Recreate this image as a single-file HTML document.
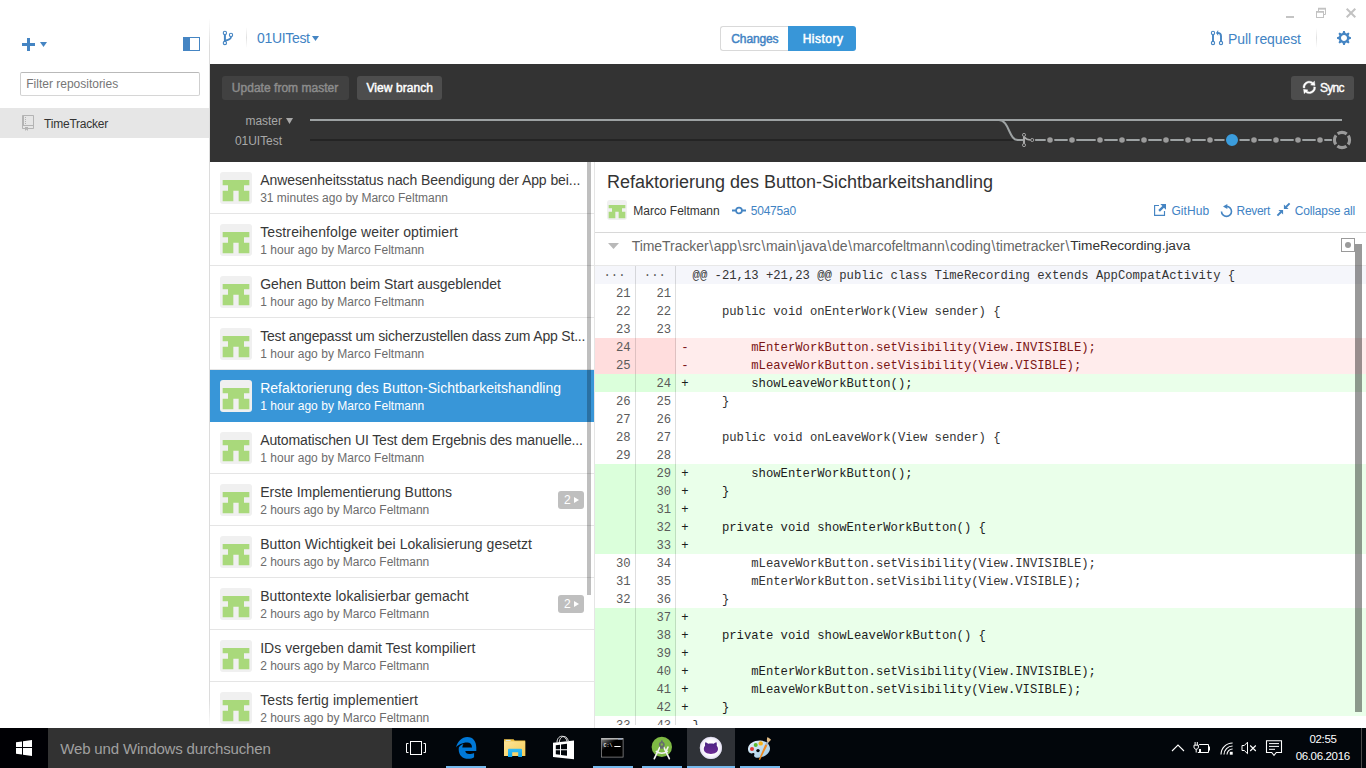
<!DOCTYPE html>
<html lang="de"><head><meta charset="utf-8"><title>GitHub</title>
<style>
html,body{margin:0;padding:0}
body{width:1366px;height:768px;overflow:hidden;background:#fff;position:relative;font-family:"Liberation Sans",sans-serif}
.t{position:absolute;white-space:pre;line-height:20px;height:20px}
.a{position:absolute}
.m{position:absolute;white-space:pre;font-family:"Liberation Mono",monospace;font-size:12.22px;line-height:18px;height:18px;color:#333;margin-top:1px}
svg{position:absolute;overflow:visible}
.row{position:absolute;left:210px;width:384px;height:51px;border-bottom:1px solid #e5e5e5}
.av{position:absolute;background:#f0f0f0;border-radius:3px}
</style></head><body>

<div class="a" style="left:209px;top:0;width:1px;height:728px;background:linear-gradient(180deg,rgba(220,220,220,0) 18px,#dcdcdc 46px,#dcdcdc 700px,rgba(220,220,220,0) 728px)"></div>
<div class="a" style="left:22px;top:43px;width:13px;height:3px;background:#4585c3"></div>
<div class="a" style="left:27px;top:38px;width:3px;height:13px;background:#4585c3"></div>
<svg style="left:40px;top:42px" width="7" height="5"><path d="M0 0H7L3.5 5Z" fill="#4585c3"/></svg>
<div class="a" style="left:183px;top:37px;width:15px;height:12px;border:1px solid #4585c3;background:linear-gradient(90deg,#4585c3 6px,#fff 6px)"></div>
<div class="a" style="left:20px;top:72px;width:178px;height:22px;border:1px solid #cfcfcf;border-top-color:#b9b9b9;border-bottom-color:#d6d6d6;border-radius:2px;background:#fff"></div>
<span id="filt" class="t" style="left:26.30px;top:73.94px;font-size:12.00px;color:#767676;font-weight:400;letter-spacing:-0.007px;">Filter repositories</span>
<div class="a" style="left:0;top:108px;width:209px;height:30px;background:#e6e6e6"></div>
<svg style="left:22px;top:115px" width="12" height="16" viewBox="0 0 12 16"><path fill="#b4b4b4" fill-rule="evenodd" d="M4 9H3V8h1v1zm0-3H3v1h1V6zm0-2H3v1h1V4zm0-2H3v1h1V2zm8-1v12c0 .55-.45 1-1 1H6v2l-1.500-1.500L3 16v-2H1c-.55 0-1-.45-1-1V1c0-.55.45-1 1-1h10c.55 0 1 .45 1 1zm-1 10H1v2h2v-1h3v1h5v-2zm0-10H2v9h9V1z"/></svg>
<span id="repo" class="t" style="left:44.10px;top:113.74px;font-size:12.00px;color:#333;font-weight:400;letter-spacing:-0.225px;">TimeTracker</span>
<svg style="left:220px;top:29px" width="14" height="18" viewBox="220 29 14 18"><g stroke="#4585c3" fill="none"><path d="M224.900 34.300V41.600" stroke-width="2"/><path d="M231 36.400V37.300C231 39.500 228 39.700 225.400 40.700" stroke-width="1.700"/><g fill="#fff" stroke-width="1.100"><circle cx="224.900" cy="32.900" r="1.650"/><circle cx="224.900" cy="43" r="1.650"/><circle cx="231" cy="34.900" r="1.650"/></g></g></svg>
<div class="a" style="left:246px;top:27px;width:1px;height:21px;background:linear-gradient(180deg,rgba(225,225,225,0),#e1e1e1 50%,rgba(225,225,225,0))"></div>
<span id="br" class="t" style="left:257.00px;top:28.15px;font-size:14.00px;color:#4183c4;font-weight:400;letter-spacing:-0.321px;">01UITest</span>
<svg style="left:312px;top:35.5px" width="7" height="5"><path d="M0 0H7L3.5 5Z" fill="#4585c3"/></svg>
<div class="a" style="left:720px;top:26px;width:68px;height:23px;border:1px solid #d9d9d9;border-right:0;border-radius:3px 0 0 3px;background:#fff"></div>
<div class="a" style="left:788px;top:26px;width:68px;height:25px;border-radius:0 3px 3px 0;background:#3896d8"></div>
<span id="chg" class="t" style="left:731.30px;top:28.84px;font-size:12.00px;color:#4183c4;font-weight:400;letter-spacing:-0.124px;-webkit-text-stroke:.45px #4183c4;">Changes</span>
<span id="his" class="t" style="left:802.70px;top:28.84px;font-size:12.00px;color:#fff;font-weight:400;letter-spacing:0.493px;-webkit-text-stroke:.5px #fff;">History</span>
<svg style="left:1209px;top:28px" width="16" height="19" viewBox="1209 28 16 19"><g stroke="#4585c3" fill="none"><path d="M1213 34.300V41.600" stroke-width="1.900"/><path d="M1221 41.600V36C1221 34 1220 32.900 1217.500 32.900" stroke-width="1.900"/><path d="M1216 32.900L1218.200 30V35.800Z" fill="#4585c3" stroke="none"/><g fill="#fff" stroke-width="1.100"><circle cx="1213" cy="32.900" r="1.650"/><circle cx="1213" cy="43" r="1.650"/><circle cx="1221" cy="43" r="1.650"/></g></g></svg>
<span id="pr" class="t" style="left:1228.00px;top:28.65px;font-size:14.00px;color:#4183c4;font-weight:400;letter-spacing:-0.085px;">Pull request</span>
<div class="a" style="left:1316px;top:28px;width:1px;height:20px;background:linear-gradient(180deg,rgba(225,225,225,0),#e1e1e1 50%,rgba(225,225,225,0))"></div>
<svg style="left:1337px;top:31px" width="14" height="14" viewBox="0 0 14 14"><path fill="#4585c3" fill-rule="evenodd" d="M14 8.770v-1.600l-1.940-.640-.450-1.090.880-1.840-1.130-1.130-1.810.910-1.090-.450-.690-1.920h-1.600l-.630 1.940-1.110.450-1.840-.880-1.130 1.130.910 1.810-.450 1.090L0 7.230v1.590l1.940.640.450 1.090-.880 1.840 1.130 1.130 1.810-.910 1.090.450.690 1.920h1.590l.630-1.940 1.110-.450 1.840.880 1.130-1.130-.920-1.810.470-1.090L14 8.750v.020zM7 11c-1.660 0-3-1.340-3-3s1.340-3 3-3 3 1.340 3 3-1.340 3-3 3z" transform="translate(0,-1)"/></svg>
<div class="a" style="left:1286px;top:16px;width:8px;height:2px;background:#c4c4c4"></div>
<svg style="left:1316px;top:8px" width="10" height="10"><g fill="none" stroke="#c2c2c2"><path d="M2.500 3V1H9.500V6.500H8"/><path d="M2 0.500H10" stroke-width="1.500"/><rect x="0.500" y="4" width="7" height="5.500" fill="#fff"/><path d="M0 3.750H8" stroke-width="1.500"/></g></svg>
<svg style="left:1346px;top:8px" width="10" height="10"><path d="M0.700 0.700L9.300 9.300M9.300 0.700L0.700 9.300" stroke="#c2c2c2" stroke-width="2"/></svg>
<div class="a" style="left:210px;top:64px;width:1156px;height:98px;background:#333"></div>
<div class="a" style="left:222px;top:76px;width:127px;height:24px;border-radius:3px;background:#414141"></div>
<div class="a" style="left:357px;top:76px;width:85px;height:24px;border-radius:3px;background:#4d4d4d"></div>
<div class="a" style="left:1291px;top:76px;width:63px;height:24px;border-radius:3px;background:#4d4d4d"></div>
<span id="upd" class="t" style="left:231.80px;top:77.84px;font-size:12.00px;color:#8c8c8c;font-weight:400;letter-spacing:0.027px;-webkit-text-stroke:.45px #8c8c8c;">Update from master</span>
<span id="vb" class="t" style="left:366.50px;top:77.84px;font-size:12.00px;color:#fff;font-weight:400;letter-spacing:0.067px;-webkit-text-stroke:.45px #fff;">View branch</span>
<span id="sync" class="t" style="left:1319.90px;top:77.84px;font-size:12.00px;color:#fff;font-weight:400;letter-spacing:-0.700px;-webkit-text-stroke:.4px #fff;">Sync</span>
<svg style="left:1303.300px;top:78.500px" width="12.600" height="16.800" viewBox="0 0 12 16"><path fill="#fff" stroke="#fff" stroke-width="0.350" fill-rule="evenodd" d="M10.240 7.400a4.150 4.150 0 0 1-1.200 3.600 4.346 4.346 0 0 1-5.410.54L4.800 10.400.5 9.800l.6 4.200 1.310-1.260c2.360 1.740 5.700 1.570 7.840-.540a5.876 5.876 0 0 0 1.740-4.460l-1.750-.340zM2.960 5a4.346 4.346 0 0 1 5.410-.540L7.200 5.600l4.300.6-.6-4.200-1.310 1.260c-2.360-1.740-5.700-1.570-7.850.540C.5 5.030-.06 6.650.01 8.260l1.750.35A4.170 4.170 0 0 1 2.960 5z"/></svg>
<span id="mas" class="t" style="left:245.50px;top:110.84px;font-size:12.00px;color:#a8a8a8;font-weight:400;letter-spacing:-0.037px;">master</span>
<svg style="left:286px;top:117.500px" width="7" height="6"><path d="M0 0H7L3.5 6Z" fill="#a8a8a8"/></svg>
<span id="uit" class="t" style="left:235.00px;top:130.54px;font-size:12.00px;color:#a8a8a8;font-weight:400;letter-spacing:-0.051px;">01UITest</span>
<svg style="left:0;top:0" width="1366" height="170"><path d="M310 140H1014" stroke="#242424" stroke-width="2" fill="none"/><path d="M310 120H1342" stroke="#9da2a3" stroke-width="2" fill="none"/><path d="M999 120C1009.500 120.500 1008.500 140 1018 140H1023M1034.800 140H1332" stroke="#9da2a3" stroke-width="2" fill="none"/><circle cx="1032.200" cy="140" r="3" fill="#333"/><g stroke="#a9a9a9" fill="#333"><path d="M1024 135.500V144.500" stroke-width="2.100" fill="none"/><path d="M1024.500 137.300C1026.500 140 1028 140 1030.700 140" stroke-width="1.600" fill="none"/><circle cx="1024" cy="134.900" r="1.550" stroke-width="0.900"/><circle cx="1024" cy="145.100" r="1.550" stroke-width="0.900"/><circle cx="1032.200" cy="140" r="1.550" stroke-width="0.900"/></g><circle cx="1050" cy="140" r="3.600" fill="#9b9b9b" stroke="#333" stroke-width="1.600"/><circle cx="1072" cy="140" r="3.600" fill="#9b9b9b" stroke="#333" stroke-width="1.600"/><circle cx="1100" cy="140" r="3.600" fill="#9b9b9b" stroke="#333" stroke-width="1.600"/><circle cx="1122" cy="140" r="3.600" fill="#9b9b9b" stroke="#333" stroke-width="1.600"/><circle cx="1144" cy="140" r="3.600" fill="#9b9b9b" stroke="#333" stroke-width="1.600"/><circle cx="1166" cy="140" r="3.600" fill="#9b9b9b" stroke="#333" stroke-width="1.600"/><circle cx="1188" cy="140" r="3.600" fill="#9b9b9b" stroke="#333" stroke-width="1.600"/><circle cx="1210" cy="140" r="3.600" fill="#9b9b9b" stroke="#333" stroke-width="1.600"/><circle cx="1254" cy="140" r="3.600" fill="#9b9b9b" stroke="#333" stroke-width="1.600"/><circle cx="1276" cy="140" r="3.600" fill="#9b9b9b" stroke="#333" stroke-width="1.600"/><circle cx="1298" cy="140" r="3.600" fill="#9b9b9b" stroke="#333" stroke-width="1.600"/><circle cx="1320" cy="140" r="3.600" fill="#9b9b9b" stroke="#333" stroke-width="1.600"/><circle cx="1232" cy="140" r="6.800" fill="#3b9ddd" stroke="#333" stroke-width="1.600"/><circle cx="1342" cy="140" r="10.200" fill="#333"/><circle cx="1342" cy="140" r="7.600" fill="none" stroke="#9b9b9b" stroke-width="3.100" stroke-dasharray="9.700 2.238" stroke-dashoffset="4.850"/></svg>
<div class="a" style="left:210px;top:162px;width:385px;height:566px;overflow:hidden;background:#fff">
</div>
<div class="row" style="top:162px;"></div>
<div class="av" style="left:220px;top:172px;width:32px;height:32px"></div><svg style="left:220px;top:172px" width="32" height="32" viewBox="0 0 6 6" shape-rendering="auto"><path fill="#a9d97b" d="M.5 1.500h5v1h-1v1h1v2h-2v-2h-1v2h-2v-2h1v-1h-1z"/></svg>
<span id="ct0" class="t" style="left:260.20px;top:170.15px;font-size:14.00px;color:#383838;font-weight:400;letter-spacing:-0.075px;">Anwesenheitsstatus nach Beendigung der App bei...</span>
<span id="cm0" class="t" style="left:260.20px;top:188.44px;font-size:12.00px;color:#6c6c6c;font-weight:400;letter-spacing:-0.009px;">31 minutes ago by Marco Feltmann</span>
<div class="row" style="top:214px;"></div>
<div class="av" style="left:220px;top:224px;width:32px;height:32px"></div><svg style="left:220px;top:224px" width="32" height="32" viewBox="0 0 6 6" shape-rendering="auto"><path fill="#a9d97b" d="M.5 1.500h5v1h-1v1h1v2h-2v-2h-1v2h-2v-2h1v-1h-1z"/></svg>
<span id="ct1" class="t" style="left:260.20px;top:222.15px;font-size:14.00px;color:#383838;font-weight:400;letter-spacing:0.127px;">Testreihenfolge weiter optimiert</span>
<span id="cm1" class="t" style="left:260.20px;top:240.44px;font-size:12.00px;color:#6c6c6c;font-weight:400;letter-spacing:0.025px;">1 hour ago by Marco Feltmann</span>
<div class="row" style="top:266px;"></div>
<div class="av" style="left:220px;top:276px;width:32px;height:32px"></div><svg style="left:220px;top:276px" width="32" height="32" viewBox="0 0 6 6" shape-rendering="auto"><path fill="#a9d97b" d="M.5 1.500h5v1h-1v1h1v2h-2v-2h-1v2h-2v-2h1v-1h-1z"/></svg>
<span id="ct2" class="t" style="left:260.20px;top:274.15px;font-size:14.00px;color:#383838;font-weight:400;letter-spacing:-0.039px;">Gehen Button beim Start ausgeblendet</span>
<span id="cm2" class="t" style="left:260.20px;top:292.44px;font-size:12.00px;color:#6c6c6c;font-weight:400;letter-spacing:0.025px;">1 hour ago by Marco Feltmann</span>
<div class="row" style="top:318px;"></div>
<div class="av" style="left:220px;top:328px;width:32px;height:32px"></div><svg style="left:220px;top:328px" width="32" height="32" viewBox="0 0 6 6" shape-rendering="auto"><path fill="#a9d97b" d="M.5 1.500h5v1h-1v1h1v2h-2v-2h-1v2h-2v-2h1v-1h-1z"/></svg>
<span id="ct3" class="t" style="left:260.20px;top:326.15px;font-size:14.00px;color:#383838;font-weight:400;letter-spacing:-0.183px;">Test angepasst um sicherzustellen dass zum App St...</span>
<span id="cm3" class="t" style="left:260.20px;top:344.44px;font-size:12.00px;color:#6c6c6c;font-weight:400;letter-spacing:0.025px;">1 hour ago by Marco Feltmann</span>
<div class="row" style="top:370px;background:#3896d8;border-bottom-color:#3896d8;"></div>
<div class="av" style="left:220px;top:380px;width:32px;height:32px"></div><svg style="left:220px;top:380px" width="32" height="32" viewBox="0 0 6 6" shape-rendering="auto"><path fill="#a9d97b" d="M.5 1.500h5v1h-1v1h1v2h-2v-2h-1v2h-2v-2h1v-1h-1z"/></svg>
<span id="ct4" class="t" style="left:260.20px;top:378.15px;font-size:14.00px;color:#fff;font-weight:400;letter-spacing:0.009px;">Refaktorierung des Button-Sichtbarkeitshandling</span>
<span id="cm4" class="t" style="left:260.20px;top:396.44px;font-size:12.00px;color:#fff;font-weight:400;letter-spacing:0.025px;">1 hour ago by Marco Feltmann</span>
<div class="row" style="top:422px;"></div>
<div class="av" style="left:220px;top:432px;width:32px;height:32px"></div><svg style="left:220px;top:432px" width="32" height="32" viewBox="0 0 6 6" shape-rendering="auto"><path fill="#a9d97b" d="M.5 1.500h5v1h-1v1h1v2h-2v-2h-1v2h-2v-2h1v-1h-1z"/></svg>
<span id="ct5" class="t" style="left:260.20px;top:430.15px;font-size:14.00px;color:#383838;font-weight:400;letter-spacing:-0.125px;">Automatischen UI Test dem Ergebnis des manuelle...</span>
<span id="cm5" class="t" style="left:260.20px;top:448.44px;font-size:12.00px;color:#6c6c6c;font-weight:400;letter-spacing:0.025px;">1 hour ago by Marco Feltmann</span>
<div class="row" style="top:474px;"></div>
<div class="av" style="left:220px;top:484px;width:32px;height:32px"></div><svg style="left:220px;top:484px" width="32" height="32" viewBox="0 0 6 6" shape-rendering="auto"><path fill="#a9d97b" d="M.5 1.500h5v1h-1v1h1v2h-2v-2h-1v2h-2v-2h1v-1h-1z"/></svg>
<span id="ct6" class="t" style="left:260.20px;top:482.15px;font-size:14.00px;color:#383838;font-weight:400;letter-spacing:-0.015px;">Erste Implementierung Buttons</span>
<span id="cm6" class="t" style="left:260.20px;top:500.44px;font-size:12.00px;color:#6c6c6c;font-weight:400;letter-spacing:-0.011px;">2 hours ago by Marco Feltmann</span>
<div class="a" style="left:558px;top:491px;width:26px;height:18px;border-radius:3px;background:#bfbfbf"></div>
<span id="bd6" class="t" style="left:564.00px;top:490.34px;font-size:12.00px;color:#fff;font-weight:400;letter-spacing:0.700px;">2</span>
<svg style="left:574px;top:497px" width="5" height="6"><path d="M0 0L5 3L0 6Z" fill="#fff"/></svg>
<div class="row" style="top:526px;"></div>
<div class="av" style="left:220px;top:536px;width:32px;height:32px"></div><svg style="left:220px;top:536px" width="32" height="32" viewBox="0 0 6 6" shape-rendering="auto"><path fill="#a9d97b" d="M.5 1.500h5v1h-1v1h1v2h-2v-2h-1v2h-2v-2h1v-1h-1z"/></svg>
<span id="ct7" class="t" style="left:260.20px;top:534.15px;font-size:14.00px;color:#383838;font-weight:400;letter-spacing:0.041px;">Button Wichtigkeit bei Lokalisierung gesetzt</span>
<span id="cm7" class="t" style="left:260.20px;top:552.44px;font-size:12.00px;color:#6c6c6c;font-weight:400;letter-spacing:-0.011px;">2 hours ago by Marco Feltmann</span>
<div class="row" style="top:578px;"></div>
<div class="av" style="left:220px;top:588px;width:32px;height:32px"></div><svg style="left:220px;top:588px" width="32" height="32" viewBox="0 0 6 6" shape-rendering="auto"><path fill="#a9d97b" d="M.5 1.500h5v1h-1v1h1v2h-2v-2h-1v2h-2v-2h1v-1h-1z"/></svg>
<span id="ct8" class="t" style="left:260.20px;top:586.15px;font-size:14.00px;color:#383838;font-weight:400;letter-spacing:0.044px;">Buttontexte lokalisierbar gemacht</span>
<span id="cm8" class="t" style="left:260.20px;top:604.44px;font-size:12.00px;color:#6c6c6c;font-weight:400;letter-spacing:-0.011px;">2 hours ago by Marco Feltmann</span>
<div class="a" style="left:558px;top:595px;width:26px;height:18px;border-radius:3px;background:#bfbfbf"></div>
<span id="bd8" class="t" style="left:564.00px;top:594.34px;font-size:12.00px;color:#fff;font-weight:400;letter-spacing:0.700px;">2</span>
<svg style="left:574px;top:601px" width="5" height="6"><path d="M0 0L5 3L0 6Z" fill="#fff"/></svg>
<div class="row" style="top:630px;"></div>
<div class="av" style="left:220px;top:640px;width:32px;height:32px"></div><svg style="left:220px;top:640px" width="32" height="32" viewBox="0 0 6 6" shape-rendering="auto"><path fill="#a9d97b" d="M.5 1.500h5v1h-1v1h1v2h-2v-2h-1v2h-2v-2h1v-1h-1z"/></svg>
<span id="ct9" class="t" style="left:260.20px;top:638.15px;font-size:14.00px;color:#383838;font-weight:400;letter-spacing:0.021px;">IDs vergeben damit Test kompiliert</span>
<span id="cm9" class="t" style="left:260.20px;top:656.44px;font-size:12.00px;color:#6c6c6c;font-weight:400;letter-spacing:-0.011px;">2 hours ago by Marco Feltmann</span>
<div class="row" style="top:682px;"></div>
<div class="av" style="left:220px;top:692px;width:32px;height:32px"></div><svg style="left:220px;top:692px" width="32" height="32" viewBox="0 0 6 6" shape-rendering="auto"><path fill="#a9d97b" d="M.5 1.500h5v1h-1v1h1v2h-2v-2h-1v2h-2v-2h1v-1h-1z"/></svg>
<span id="ct10" class="t" style="left:260.20px;top:690.15px;font-size:14.00px;color:#383838;font-weight:400;letter-spacing:0.088px;">Tests fertig implementiert</span>
<span id="cm10" class="t" style="left:260.20px;top:708.44px;font-size:12.00px;color:#6c6c6c;font-weight:400;letter-spacing:-0.011px;">2 hours ago by Marco Feltmann</span>
<div class="a" style="left:587.300px;top:162px;width:3.500px;height:432.500px;background:rgba(0,0,0,.25)"></div>
<div class="a" style="left:594px;top:162px;width:1px;height:566px;background:#e5e5e5"></div>
<span id="dt" class="t" style="left:607.10px;top:172.26px;font-size:18.00px;color:#333;font-weight:400;letter-spacing:-0.005px;">Refaktorierung des Button-Sichtbarkeitshandling</span>
<div class="av" style="left:607px;top:200px;width:20px;height:20px"></div><svg style="left:607px;top:200px" width="20" height="20" viewBox="0 0 6 6" shape-rendering="auto"><path fill="#a9d97b" d="M.5 1.500h5v1h-1v1h1v2h-2v-2h-1v2h-2v-2h1v-1h-1z"/></svg>
<span id="au" class="t" style="left:633.30px;top:200.64px;font-size:12.00px;color:#333;font-weight:400;letter-spacing:-0.023px;">Marco Feltmann</span>
<svg style="left:732px;top:206px" width="14" height="9" viewBox="0 0 14 9"><path d="M0 4.500H4M10 4.500H14" stroke="#4585c3" stroke-width="1.800"/><circle cx="7" cy="4.500" r="2.900" fill="none" stroke="#4585c3" stroke-width="1.700"/></svg>
<span id="sha" class="t" style="left:750.70px;top:200.64px;font-size:12.00px;color:#4183c4;font-weight:400;letter-spacing:-0.203px;">50475a0</span>
<svg style="left:1154px;top:204px" width="12" height="12" viewBox="0 0 12 12"><path d="M5 1.500H0.600V11.400H10.500V7" fill="none" stroke="#4585c3" stroke-width="1.150"/><path d="M6.300 0H12V5.700L9.950 3.650L5.900 7.700L4.300 6.100L8.350 2.050Z" fill="#4585c3"/></svg>
<span id="gh" class="t" style="left:1171.40px;top:200.64px;font-size:12.00px;color:#4183c4;font-weight:400;letter-spacing:0.088px;">GitHub</span>
<svg style="left:1219.500px;top:203.500px" width="13" height="13.500" viewBox="0 0 13 13.500"><path d="M6.500 2.400A5 5 0 1 1 1.500 7.400" fill="none" stroke="#4585c3" stroke-width="1.600"/><path d="M3 2.500L7.300 -0.100V5.100Z" fill="#4585c3"/></svg>
<span id="rv" class="t" style="left:1236.50px;top:200.64px;font-size:12.00px;color:#4183c4;font-weight:400;letter-spacing:-0.289px;">Revert</span>
<svg style="left:1277px;top:203px" width="13" height="13" viewBox="0 0 13 13"><g stroke="#4585c3" stroke-width="1.900" fill="#4585c3"><path d="M12.600 0.400L9 4M0.400 12.600L4 9" fill="none"/><path d="M6.900 1.400V6.100H11.600Z M6.100 11.600V6.900H1.400Z" stroke="none"/></g></svg>
<span id="ca" class="t" style="left:1294.70px;top:200.64px;font-size:12.00px;color:#4183c4;font-weight:400;letter-spacing:-0.132px;">Collapse all</span>
<div class="a" style="left:595px;top:232px;width:771px;height:1px;background:#d8d8d8"></div>
<svg style="left:608px;top:242.500px" width="11" height="6"><path d="M0 0H11L5.500 6Z" fill="#b9b9b9"/></svg>
<span id="p1" class="t" style="left:631.70px;top:236.15px;font-size:14.00px;color:#666;font-weight:400;letter-spacing:-0.053px;">TimeTracker<span style="margin:0 .7px">\</span>app<span style="margin:0 .7px">\</span>src<span style="margin:0 .7px">\</span>main<span style="margin:0 .7px">\</span>java<span style="margin:0 .7px">\</span>de<span style="margin:0 .7px">\</span>marcofeltmann<span style="margin:0 .7px">\</span>coding<span style="margin:0 .7px">\</span>timetracker<span style="margin:0 .7px">\</span></span>
<span id="p2" class="t" style="left:1070.30px;top:236.25px;font-size:13.70px;color:#333;font-weight:400;letter-spacing:-0.072px;">TimeRecording.java</span>
<div class="a" style="left:1341px;top:238px;width:12px;height:12px;border:1px solid #9a9a9a;background:#fff"></div>
<div class="a" style="left:1345px;top:242px;width:6px;height:6px;border-radius:3px;background:#9a9a9a"></div>
<div class="a" style="left:595px;top:265px;width:771px;height:1px;background:#e8e8e8"></div>
<div class="a" style="left:595px;top:266px;width:771px;height:459px;overflow:hidden">
<div class="a" style="left:0;top:0px;width:81px;height:18px;background:#f5f6fb"></div><div class="a" style="left:81px;top:0px;width:690px;height:18px;background:#f5f6fb"></div>
<span class="m" style="left:8.5px;top:0px;color:#5a5a5a">···</span><span class="m" style="left:48.8px;top:0px;color:#5a5a5a">···</span>
<span class="m" style="left:97.6px;top:0px;color:#333">@@ -21,13 +21,23 @@ public class TimeRecording extends AppCompatActivity {</span>
<div class="a" style="left:0;top:18px;width:81px;height:18px;background:#fff"></div><div class="a" style="left:81px;top:18px;width:690px;height:18px;background:#fff"></div>
<span class="m" style="right:735.4px;top:18px;color:#5a5a5a">21</span>
<span class="m" style="right:694.8px;top:18px;color:#5a5a5a">21</span>
<div class="a" style="left:0;top:36px;width:81px;height:18px;background:#fff"></div><div class="a" style="left:81px;top:36px;width:690px;height:18px;background:#fff"></div>
<span class="m" style="right:735.4px;top:36px;color:#5a5a5a">22</span>
<span class="m" style="right:694.8px;top:36px;color:#5a5a5a">22</span>
<span class="m" style="left:97.6px;top:36px;color:#333">    public void onEnterWork(View sender) {</span>
<div class="a" style="left:0;top:54px;width:81px;height:18px;background:#fff"></div><div class="a" style="left:81px;top:54px;width:690px;height:18px;background:#fff"></div>
<span class="m" style="right:735.4px;top:54px;color:#5a5a5a">23</span>
<span class="m" style="right:694.8px;top:54px;color:#5a5a5a">23</span>
<div class="a" style="left:0;top:72px;width:81px;height:18px;background:#ffdddd"></div><div class="a" style="left:81px;top:72px;width:690px;height:18px;background:#ffecec"></div>
<span class="m" style="right:735.4px;top:72px;color:#5a5a5a">24</span>
<span class="m" style="left:86.2px;top:72px;color:#7a1515">-</span>
<span class="m" style="left:97.6px;top:72px;color:#7a1515">        mEnterWorkButton.setVisibility(View.INVISIBLE);</span>
<div class="a" style="left:0;top:90px;width:81px;height:18px;background:#ffdddd"></div><div class="a" style="left:81px;top:90px;width:690px;height:18px;background:#ffecec"></div>
<span class="m" style="right:735.4px;top:90px;color:#5a5a5a">25</span>
<span class="m" style="left:86.2px;top:90px;color:#7a1515">-</span>
<span class="m" style="left:97.6px;top:90px;color:#7a1515">        mLeaveWorkButton.setVisibility(View.VISIBLE);</span>
<div class="a" style="left:0;top:108px;width:81px;height:18px;background:#dbffdb"></div><div class="a" style="left:81px;top:108px;width:690px;height:18px;background:#eaffea"></div>
<span class="m" style="right:694.8px;top:108px;color:#5a5a5a">24</span>
<span class="m" style="left:86.2px;top:108px;color:#1c1c1c">+</span>
<span class="m" style="left:97.6px;top:108px;color:#1c1c1c">        showLeaveWorkButton();</span>
<div class="a" style="left:0;top:126px;width:81px;height:18px;background:#fff"></div><div class="a" style="left:81px;top:126px;width:690px;height:18px;background:#fff"></div>
<span class="m" style="right:735.4px;top:126px;color:#5a5a5a">26</span>
<span class="m" style="right:694.8px;top:126px;color:#5a5a5a">25</span>
<span class="m" style="left:97.6px;top:126px;color:#333">    }</span>
<div class="a" style="left:0;top:144px;width:81px;height:18px;background:#fff"></div><div class="a" style="left:81px;top:144px;width:690px;height:18px;background:#fff"></div>
<span class="m" style="right:735.4px;top:144px;color:#5a5a5a">27</span>
<span class="m" style="right:694.8px;top:144px;color:#5a5a5a">26</span>
<div class="a" style="left:0;top:162px;width:81px;height:18px;background:#fff"></div><div class="a" style="left:81px;top:162px;width:690px;height:18px;background:#fff"></div>
<span class="m" style="right:735.4px;top:162px;color:#5a5a5a">28</span>
<span class="m" style="right:694.8px;top:162px;color:#5a5a5a">27</span>
<span class="m" style="left:97.6px;top:162px;color:#333">    public void onLeaveWork(View sender) {</span>
<div class="a" style="left:0;top:180px;width:81px;height:18px;background:#fff"></div><div class="a" style="left:81px;top:180px;width:690px;height:18px;background:#fff"></div>
<span class="m" style="right:735.4px;top:180px;color:#5a5a5a">29</span>
<span class="m" style="right:694.8px;top:180px;color:#5a5a5a">28</span>
<div class="a" style="left:0;top:198px;width:81px;height:18px;background:#dbffdb"></div><div class="a" style="left:81px;top:198px;width:690px;height:18px;background:#eaffea"></div>
<span class="m" style="right:694.8px;top:198px;color:#5a5a5a">29</span>
<span class="m" style="left:86.2px;top:198px;color:#1c1c1c">+</span>
<span class="m" style="left:97.6px;top:198px;color:#1c1c1c">        showEnterWorkButton();</span>
<div class="a" style="left:0;top:216px;width:81px;height:18px;background:#dbffdb"></div><div class="a" style="left:81px;top:216px;width:690px;height:18px;background:#eaffea"></div>
<span class="m" style="right:694.8px;top:216px;color:#5a5a5a">30</span>
<span class="m" style="left:86.2px;top:216px;color:#1c1c1c">+</span>
<span class="m" style="left:97.6px;top:216px;color:#1c1c1c">    }</span>
<div class="a" style="left:0;top:234px;width:81px;height:18px;background:#dbffdb"></div><div class="a" style="left:81px;top:234px;width:690px;height:18px;background:#eaffea"></div>
<span class="m" style="right:694.8px;top:234px;color:#5a5a5a">31</span>
<span class="m" style="left:86.2px;top:234px;color:#1c1c1c">+</span>
<div class="a" style="left:0;top:252px;width:81px;height:18px;background:#dbffdb"></div><div class="a" style="left:81px;top:252px;width:690px;height:18px;background:#eaffea"></div>
<span class="m" style="right:694.8px;top:252px;color:#5a5a5a">32</span>
<span class="m" style="left:86.2px;top:252px;color:#1c1c1c">+</span>
<span class="m" style="left:97.6px;top:252px;color:#1c1c1c">    private void showEnterWorkButton() {</span>
<div class="a" style="left:0;top:270px;width:81px;height:18px;background:#dbffdb"></div><div class="a" style="left:81px;top:270px;width:690px;height:18px;background:#eaffea"></div>
<span class="m" style="right:694.8px;top:270px;color:#5a5a5a">33</span>
<span class="m" style="left:86.2px;top:270px;color:#1c1c1c">+</span>
<div class="a" style="left:0;top:288px;width:81px;height:18px;background:#fff"></div><div class="a" style="left:81px;top:288px;width:690px;height:18px;background:#fff"></div>
<span class="m" style="right:735.4px;top:288px;color:#5a5a5a">30</span>
<span class="m" style="right:694.8px;top:288px;color:#5a5a5a">34</span>
<span class="m" style="left:97.6px;top:288px;color:#333">        mLeaveWorkButton.setVisibility(View.INVISIBLE);</span>
<div class="a" style="left:0;top:306px;width:81px;height:18px;background:#fff"></div><div class="a" style="left:81px;top:306px;width:690px;height:18px;background:#fff"></div>
<span class="m" style="right:735.4px;top:306px;color:#5a5a5a">31</span>
<span class="m" style="right:694.8px;top:306px;color:#5a5a5a">35</span>
<span class="m" style="left:97.6px;top:306px;color:#333">        mEnterWorkButton.setVisibility(View.VISIBLE);</span>
<div class="a" style="left:0;top:324px;width:81px;height:18px;background:#fff"></div><div class="a" style="left:81px;top:324px;width:690px;height:18px;background:#fff"></div>
<span class="m" style="right:735.4px;top:324px;color:#5a5a5a">32</span>
<span class="m" style="right:694.8px;top:324px;color:#5a5a5a">36</span>
<span class="m" style="left:97.6px;top:324px;color:#333">    }</span>
<div class="a" style="left:0;top:342px;width:81px;height:18px;background:#dbffdb"></div><div class="a" style="left:81px;top:342px;width:690px;height:18px;background:#eaffea"></div>
<span class="m" style="right:694.8px;top:342px;color:#5a5a5a">37</span>
<span class="m" style="left:86.2px;top:342px;color:#1c1c1c">+</span>
<div class="a" style="left:0;top:360px;width:81px;height:18px;background:#dbffdb"></div><div class="a" style="left:81px;top:360px;width:690px;height:18px;background:#eaffea"></div>
<span class="m" style="right:694.8px;top:360px;color:#5a5a5a">38</span>
<span class="m" style="left:86.2px;top:360px;color:#1c1c1c">+</span>
<span class="m" style="left:97.6px;top:360px;color:#1c1c1c">    private void showLeaveWorkButton() {</span>
<div class="a" style="left:0;top:378px;width:81px;height:18px;background:#dbffdb"></div><div class="a" style="left:81px;top:378px;width:690px;height:18px;background:#eaffea"></div>
<span class="m" style="right:694.8px;top:378px;color:#5a5a5a">39</span>
<span class="m" style="left:86.2px;top:378px;color:#1c1c1c">+</span>
<div class="a" style="left:0;top:396px;width:81px;height:18px;background:#dbffdb"></div><div class="a" style="left:81px;top:396px;width:690px;height:18px;background:#eaffea"></div>
<span class="m" style="right:694.8px;top:396px;color:#5a5a5a">40</span>
<span class="m" style="left:86.2px;top:396px;color:#1c1c1c">+</span>
<span class="m" style="left:97.6px;top:396px;color:#1c1c1c">        mEnterWorkButton.setVisibility(View.INVISIBLE);</span>
<div class="a" style="left:0;top:414px;width:81px;height:18px;background:#dbffdb"></div><div class="a" style="left:81px;top:414px;width:690px;height:18px;background:#eaffea"></div>
<span class="m" style="right:694.8px;top:414px;color:#5a5a5a">41</span>
<span class="m" style="left:86.2px;top:414px;color:#1c1c1c">+</span>
<span class="m" style="left:97.6px;top:414px;color:#1c1c1c">        mLeaveWorkButton.setVisibility(View.VISIBLE);</span>
<div class="a" style="left:0;top:432px;width:81px;height:18px;background:#dbffdb"></div><div class="a" style="left:81px;top:432px;width:690px;height:18px;background:#eaffea"></div>
<span class="m" style="right:694.8px;top:432px;color:#5a5a5a">42</span>
<span class="m" style="left:86.2px;top:432px;color:#1c1c1c">+</span>
<span class="m" style="left:97.6px;top:432px;color:#1c1c1c">    }</span>
<div class="a" style="left:0;top:450px;width:81px;height:18px;background:#fff"></div><div class="a" style="left:81px;top:450px;width:690px;height:18px;background:#fff"></div>
<span class="m" style="right:735.4px;top:450px;color:#5a5a5a">33</span>
<span class="m" style="right:694.8px;top:450px;color:#5a5a5a">43</span>
<span class="m" style="left:97.6px;top:450px;color:#333">}</span>
<div class="a" style="left:40px;top:0;width:1px;height:470px;background:rgba(0,0,0,.13)"></div>
<div class="a" style="left:80px;top:0;width:1px;height:470px;background:rgba(0,0,0,.13)"></div>
</div>
<div class="a" style="left:1355px;top:244px;width:7px;height:468px;background:rgba(0,0,0,.4)"></div>
<div class="a" style="left:0;top:728px;width:1366px;height:40px;background:#02060b"></div>
<div class="a" style="left:0;top:728px;width:48px;height:40px;background:#000004"></div>
<div class="a" style="left:48px;top:728px;width:344px;height:40px;background:#323232"></div>
<svg style="left:16px;top:740px" width="16" height="16" viewBox="0 0 16 16"><path fill="#fff" d="M0 2.200L6 1.400V7H0ZM7 1.250L16 0V7H7ZM0 8H6V14.600L0 13.800ZM7 8H16V16L7 14.750Z"/></svg>
<span id="srch" class="t" style="left:60.30px;top:738.80px;font-size:15.00px;color:#a0a0a0;font-weight:400;letter-spacing:-0.167px;">Web und Windows durchsuchen</span>
<div class="a" style="left:687px;top:728px;width:48px;height:40px;background:#2f3237"></div>
<div class="a" style="left:446px;top:766px;width:40px;height:2px;background:#76b9ed"></div>
<div class="a" style="left:593px;top:766px;width:40px;height:2px;background:#76b9ed"></div>
<div class="a" style="left:642px;top:766px;width:40px;height:2px;background:#76b9ed"></div>
<div class="a" style="left:687px;top:766px;width:48px;height:2px;background:#76b9ed"></div>
<div class="a" style="left:740px;top:766px;width:40px;height:2px;background:#76b9ed"></div>
<svg style="left:405px;top:740px" width="22" height="16" viewBox="0 0 22 16"><g fill="none" stroke="#fff" stroke-width="1"><rect x="5.500" y="1.500" width="11" height="13"/><path d="M3.500 3.500H1.500V12.500H3.500M18.500 3.500H20.500V12.500H18.500"/></g></svg>
<svg style="left:455.800px;top:737px" width="20.400" height="21.800" viewBox="0 0 20.400 21.800"><path fill="#0078d7" d="M0 10.500C1.500 4.500 6 0 11.200 0C17.500 0 20.300 5 20.300 10.500V14H9.300C9.500 15.800 11 17 13.200 17C15.200 17 16.800 16.700 18.100 16V20.300C16.500 21.300 14.600 21.800 12.400 21.800C6.500 21.800 2.700 18 2.700 12.400C2.700 11.700 2.800 11 2.900 10.300C4 8.600 5.500 7.500 7.400 6.900C6.800 8 6.400 9.200 6.300 10.500H16C16 7.500 14.200 5.600 11.200 5.600C8.500 5.600 6.500 6.200 4.500 7.100C2.800 7.900 1.200 9 0 10.500Z"/></svg>
<svg style="left:504px;top:739px" width="22" height="18" viewBox="0 0 22 18"><defs><linearGradient id="fg" x1="0" y1="0" x2="1" y2="1"><stop offset="0" stop-color="#fde59a"/><stop offset="1" stop-color="#f6cd55"/></linearGradient><linearGradient id="bg2" x1="0" y1="0" x2="0" y2="1"><stop offset="0" stop-color="#35bdf5"/><stop offset="1" stop-color="#0aa4ee"/></linearGradient></defs><path d="M0 0.300H9.600L10.600 1.500H21.200V17H0Z" fill="#eebf3f"/><rect x="0" y="2.300" width="21.200" height="14.700" fill="url(#fg)"/><rect x="1.600" y="0.900" width="5" height="1" fill="#d9eef8"/><path d="M4 18V10.800Q4 9.800 5 9.800H17Q18 9.800 18 10.800V18H14.200V13.300H8.200V18Z" fill="url(#bg2)"/></svg>
<svg style="left:552px;top:735px" width="23" height="25" viewBox="0 0 23 25"><path d="M5 7.500C5 3 8 0.800 10.500 1.300C13 1.800 14.500 4 15 6.300M7.300 7.200C7.500 3.500 10 1 12.500 1.500C14.500 2 15.800 3.800 16.300 6" fill="none" stroke="#fff" stroke-width="0.900"/><path d="M1 7.700L22 5.500V24.300L1 22Z" fill="#fff"/><path d="M3.800 10.200L8 9.700V14.200H3.800ZM9 9.600L15 8.800V14.200H9ZM3.800 15.200H8V19.800L3.800 19.300ZM9 15.200H15V20.700L9 19.900Z" fill="#02060b"/></svg>
<svg style="left:601px;top:738px" width="23" height="20" viewBox="0 0 23 20"><defs><linearGradient id="cg" x1="0" y1="0" x2="0.700" y2="0.800"><stop offset="0" stop-color="#8a8a8a"/><stop offset="0.500" stop-color="#000"/></linearGradient></defs><rect x="0.400" y="0.400" width="21.700" height="18.700" fill="url(#cg)" stroke="#9a9a9a" stroke-width="0.700"/><rect x="0.400" y="0.200" width="21.700" height="1.300" fill="#c4c4c4"/><rect x="17" y="0.600" width="4" height="0.900" fill="#8fa9cf"/><text x="2.600" y="8.600" font-family="Liberation Mono,monospace" font-size="5.200" font-weight="700" fill="#ddd" textLength="9" lengthAdjust="spacingAndGlyphs">C:\</text><rect x="13.300" y="8" width="6.300" height="1" fill="#fff"/></svg>
<svg style="left:651px;top:736px" width="22" height="24" viewBox="0 0 22 24"><circle cx="10.800" cy="10.900" r="10.200" fill="#7eb944"/><path d="M10.800 10.900a10.200 10.200 0 0 0 10.200 0a10.200 10.200 0 0 1 -20.400 0z" fill="#75b03c" opacity="0"/><path d="M8.700 11.500L3.300 22.700M12.900 11.500L18.300 22.700" stroke="#f3f3f3" stroke-width="1.700" fill="none" stroke-linecap="round"/><path d="M4.800 15.200Q10.800 19.500 16.800 15.200" stroke="#f3f3f3" stroke-width="1.500" fill="none"/><path d="M14.300 16.800L17.300 10.500" stroke="#f3f3f3" stroke-width="1.600" fill="none"/><rect x="9.900" y="4.400" width="1.800" height="2.500" fill="#666b6f"/><rect x="9" y="10.500" width="3.600" height="2.200" fill="#666b6f"/><circle cx="10.800" cy="8.600" r="2.100" fill="#7eb944" stroke="#666b6f" stroke-width="1.700"/></svg>
<svg style="left:699px;top:736px" width="24" height="24" viewBox="0 0 24 24"><defs><linearGradient id="pg" x1="0" y1="0" x2="0" y2="1"><stop offset="0" stop-color="#4b2583"/><stop offset="1" stop-color="#6c2a94"/></linearGradient></defs><radialGradient id="wg"><stop offset="0.600" stop-color="#fff"/><stop offset="1" stop-color="#e9e5f5"/></radialGradient><circle cx="11.900" cy="11.900" r="11" fill="url(#wg)"/><circle cx="11.900" cy="11.900" r="10.700" fill="none" stroke="#dcd7ee" stroke-width="0.600"/><path d="M6.300 6.300C7.300 6.500 8.400 7.100 9.100 7.700C10.900 7.300 12.900 7.300 14.700 7.700C15.400 7.100 16.500 6.500 17.500 6.300C17.900 7.400 17.900 8.500 17.700 9.400C18.600 10.500 19 11.600 19 12.800C19 16.300 16 17.900 11.900 17.900C7.800 17.900 4.800 16.300 4.800 12.800C4.800 11.600 5.200 10.500 6.100 9.400C5.900 8.500 5.900 7.400 6.300 6.300Z" fill="url(#pg)"/></svg>
<svg style="left:747px;top:737px" width="24" height="24" viewBox="0 0 24 24"><defs><linearGradient id="pl" x1="0" y1="0" x2="1" y2="1"><stop offset="0" stop-color="#e4f1fa"/><stop offset="1" stop-color="#9fcbe6"/></linearGradient></defs><path d="M1 11.500C1.500 6.500 7 3.300 13.500 3.500C19.500 3.700 23 7.500 23 11.500C23 16.500 17 20.700 11 20.700C8 20.700 6.500 19.500 7.300 17.800C7.900 16.500 7 15.700 5.500 16.300C3 17.300 0.700 15 1 11.500Z" fill="url(#pl)"/><circle cx="11" cy="13.600" r="1.700" fill="#02060b"/><circle cx="5" cy="12" r="2" fill="#e53935"/><circle cx="8.700" cy="8.100" r="2" fill="#5dbb2f"/><circle cx="13.700" cy="6.400" r="2.200" fill="#f5b21a"/><path d="M11.800 22.600L13 23L20.300 8.400L18.300 7.300Z" fill="#f08a1d"/><path d="M18.300 7.300L20.300 8.400L21.700 5.200L20 4.400Z" fill="#a7adb3"/><path d="M20 4.400L21.700 5.200C22.500 4.500 23.600 3.600 24 2.800C23.200 1.600 21.400 0.500 20.300 0.300C19.900 1.600 19.800 3.300 20 4.400Z" fill="#e3bd86"/></svg>
<span id="tm" class="t" style="left:1309.50px;top:728.62px;font-size:11.50px;color:#fff;font-weight:400;letter-spacing:-0.345px;">02:55</span>
<span id="dtx" class="t" style="left:1295.70px;top:745.52px;font-size:11.50px;color:#fff;font-weight:400;letter-spacing:-0.351px;">06.06.2016</span>
<div class="a" style="left:1361px;top:728px;width:1px;height:40px;background:#4a4a4a"></div>
<svg style="left:1171px;top:743px" width="14" height="9" viewBox="0 0 14 9"><path d="M1 8L7 2L13 8" fill="none" stroke="#fff" stroke-width="1.100"/></svg>
<svg style="left:1193px;top:741px" width="18" height="13" viewBox="0 0 18 13"><g fill="none" stroke="#fff" stroke-width="1"><path d="M6.200 3.500H15.500V11.500H4.800"/><path d="M16.300 5.500V9.500" stroke-width="1.400"/><path d="M2.100 1V4M4.300 1V4"/><path d="M1 4.200H5.400V6C5.400 7.500 4.500 8.200 3.200 8.200C1.900 8.200 1 7.500 1 6Z" fill="#02060b"/><path d="M3.200 8.200V11.500"/></g><rect x="6" y="8" width="2" height="3" fill="#fff"/></svg>
<svg style="left:1220px;top:742px" width="14" height="13" viewBox="0 0 14 13"><g fill="none" stroke="#fff" stroke-width="1.100"><path d="M1 12.600A11.600 11.600 0 0 1 12.600 1"/><path d="M4 12.600A8.600 8.600 0 0 1 12.600 4"/><path d="M7 12.600A5.600 5.600 0 0 1 12.600 7"/></g><rect x="9.800" y="9.800" width="2.900" height="2.900" fill="#fff"/></svg>
<svg style="left:1241px;top:741px" width="16" height="14" viewBox="0 0 16 14"><path d="M1 4.500H3.300L6.500 1.200V12.700L3.300 9.500H1Z" fill="none" stroke="#fff" stroke-width="1"/><path d="M9.200 4.500L14.800 10M14.800 4.500L9.200 10" stroke="#fff" stroke-width="1.100"/></svg>
<svg style="left:1265px;top:739px" width="18" height="18" viewBox="0 0 18 18"><path d="M1.500 1.700H16.500V13.500H11.300L9 16.300L6.700 13.500H1.500Z" fill="none" stroke="#fff" stroke-width="1.100"/><path d="M4 4.600H14M4 7.400H14M4 10.300H10" stroke="#fff" stroke-width="1"/></svg>
</body></html>
